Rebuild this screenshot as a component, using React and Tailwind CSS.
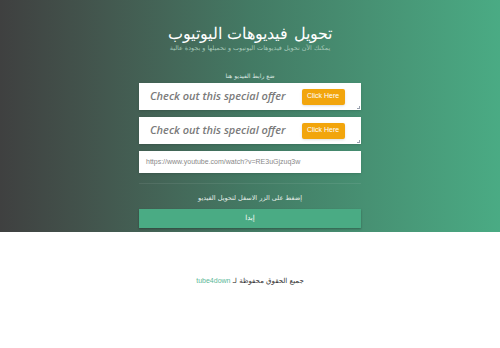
import React from 'react';

const Offer = () => (
  <div className="relative flex h-[27px] items-center bg-white pl-[11px] shadow-sm">
    <span
      className="whitespace-nowrap text-[11px] font-semibold italic text-[#7a7a7a]"
      style={{ fontFamily: '"Open Sans", sans-serif' }}
    >
      Check out this special offer
    </span>
    <span
      className="ml-[16px] flex h-[16px] w-[43px] items-center justify-center rounded-[2px] bg-[#f2a50c] text-[7px] text-white shadow-sm"
      style={{ fontFamily: '"Liberation Sans", sans-serif' }}
    >
      Click Here
    </span>
    <span className="absolute bottom-[1px] right-[1px] h-[3px] w-[3px] border-b border-r border-gray-400"></span>
  </div>
);

const App = () => {
  return (
    <div
      className="min-h-[348px] bg-white"
      style={{ fontFamily: '"DejaVu Sans", "Noto Sans", sans-serif' }}
    >
      {/* Header */}
      <div className="h-[232px] bg-gradient-to-r from-[#3f4040] via-[#437a64] to-[#4aab84]">
        <div className="mx-auto flex w-[222px] flex-col pt-[24px]">
          <h1 dir="rtl" className="text-center text-[16px] font-light leading-[20px] text-white">
            تحويل فيديوهات اليوتيوب
          </h1>
          <p dir="rtl" className="text-center text-[6.4px] leading-[9px] text-[#a6c9b9]">
            يمكنك الآن تحويل فيديوهات اليوتيوب و تحميلها و بجودة عالية
          </p>
          <p dir="rtl" className="mt-[19px] text-center text-[6px] leading-[8px] text-[#dbe8e2]">
            ضع رابط الفيديو هنا
          </p>
          <div className="mt-[3px] flex flex-col gap-[7px]">
            <Offer />
            <Offer />
            <div className="flex h-[22px] items-center bg-white px-[7px] shadow-sm">
              <span
                className="text-[7px] text-[#888]"
                style={{ fontFamily: '"Liberation Sans", sans-serif' }}
              >
                https://www.youtube.com/watch?v=RE3uGjzuq3w
              </span>
            </div>
          </div>
          <div className="mt-[10px] border-t border-[#ffffff14]"></div>
          <p dir="rtl" className="mt-[10px] text-center text-[6.5px] leading-[9px] text-[#e4eee9]">
            إضغط على الزر الاسفل لتحويل الفيديو
          </p>
          <button className="mt-[6px] flex h-[19px] items-center justify-center bg-[#4aab84] text-[7px] text-white shadow-[0_1px_2px_rgba(0,0,0,0.3)]">
            إبدا
          </button>
        </div>
      </div>

      {/* Footer */}
      <div className="flex justify-center pt-[44px]">
        <p dir="rtl" className="text-[7px] text-[#333]">
          جميع الحقوق محفوظة لـ{' '}
          <span className="text-[#5bb898]" style={{ fontFamily: '"Liberation Sans", sans-serif' }}>
            tube4down
          </span>
        </p>
      </div>
    </div>
  );
};

export default App;
